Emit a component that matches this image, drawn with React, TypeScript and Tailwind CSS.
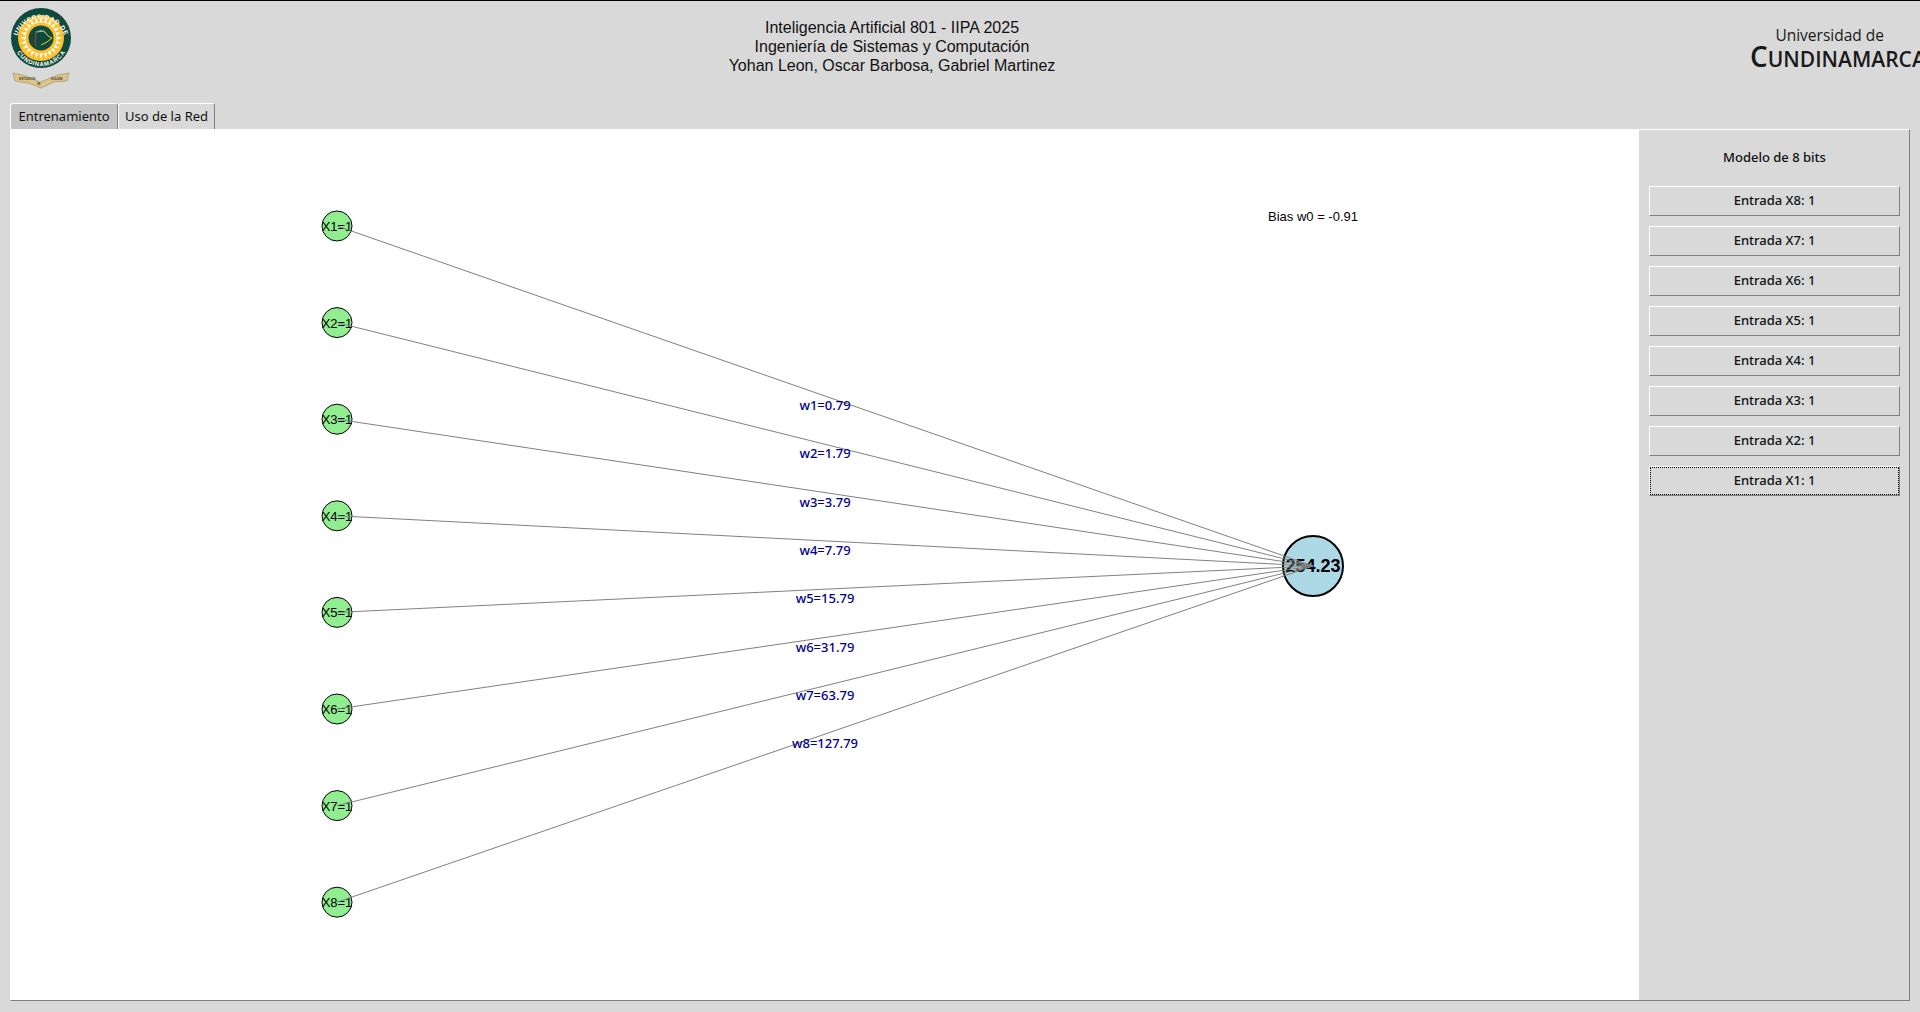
import React from "react";

const inputs = [
  { n: "X1=1", w: "w1=0.79" },
  { n: "X2=1", w: "w2=1.79" },
  { n: "X3=1", w: "w3=3.79" },
  { n: "X4=1", w: "w4=7.79" },
  { n: "X5=1", w: "w5=15.79" },
  { n: "X6=1", w: "w6=31.79" },
  { n: "X7=1", w: "w7=63.79" },
  { n: "X8=1", w: "w8=127.79" },
];

const buttons = ["X8", "X7", "X6", "X5", "X4", "X3", "X2", "X1"];

const nodeY = (i: number) => 216 + i * 96.6;

const Logo = () => {
  const rays = Array.from({ length: 24 }, (_, i) => {
    const a = (i * Math.PI) / 12;
    const b = a + Math.PI / 24;
    const c = a - Math.PI / 24;
    return `${30 + 21 * Math.cos(a)},${30 + 21 * Math.sin(a)} ${30 + 15 * Math.cos(b)},${30 + 15 * Math.sin(b)} ${30 + 15 * Math.cos(c)},${30 + 15 * Math.sin(c)}`;
  });
  return (
    <svg width="64" height="82" viewBox="0 0 64 82" className="block">
      <defs>
        <path id="logoTop" d="M 6.5 32 A 25 25 0 0 1 55.5 32" />
        <path id="logoBot" d="M 8 38 A 24 24 0 0 0 54 38" />
      </defs>
      <g transform="translate(1 1)">
        <circle cx="30" cy="30" r="30" fill="#0f4a3c" />
        <circle cx="30" cy="30" r="23" fill="#fdc02f" />
        {rays.map((r, i) => (
          <polygon key={i} points={r} fill="#ffffff" />
        ))}
        <circle cx="30" cy="30" r="15.5" fill="#fdc02f" />
        <circle cx="30" cy="30" r="12.5" fill="#0f4a3c" />
        <path d="M25 24 L33 23 L37 28 L41 30 L36 34 L30 37" fill="none" stroke="#e6cf3a" strokeWidth="1" />
        <path d="M25 24 L24 36 L26 38" fill="none" stroke="#c0392b" strokeWidth="1" />
        <path d="M25 24 L31 22 L35 26" fill="none" stroke="#5a9bd5" strokeWidth="1" />
      </g>
      <g fontFamily="'Liberation Sans', sans-serif" fontWeight="700" fontSize="6.4" fill="#ffffff">
        <text letterSpacing="0.5"><textPath href="#logoTop" startOffset="50%" textAnchor="middle">UNIVERSIDAD DE</textPath></text>
        <text fontSize="6"><textPath href="#logoBot" startOffset="50%" textAnchor="middle" dominantBaseline="hanging">CUNDINAMARCA</textPath></text>
      </g>
      <path d="M3 66 L13 68 L30 75 L48 68 L59 66 L57 74 L44 75 L31 81 L18 76 L5 74 Z" fill="#d9c58c" stroke="#a08c52" strokeWidth="0.6" />
      <g fontFamily="'Liberation Sans', sans-serif" fontSize="3.2" fill="#4a4020" fontWeight="700">
        <text x="9" y="73">ESTUDIOS</text>
        <text x="27" y="78">IN</text>
        <text x="41" y="73">SOLEM</text>
      </g>
    </svg>
  );
};

const App = () => {
  return (
    <div className="w-[1920px] h-[1012px] bg-[#d9d9d9] border-t border-black flex flex-col overflow-hidden">
      {/* header */}
      <div className="h-[102px] flex justify-between pl-[10px] pr-[10px] pt-[6px] shrink-0">
        <Logo />
        <div className="mt-[11px] ml-[-40px] text-center text-[#111] text-[16px] leading-[19px] font-['Liberation_Sans',sans-serif] w-[500px]">
          <p>Inteligencia Artificial 801 - IIPA 2025</p>
          <p>Ingeniería de Sistemas y Computación</p>
          <p>Yohan Leon, Oscar Barbosa, Gabriel Martinez</p>
        </div>
        <div className="w-[160px] pt-[18px] text-right font-['Open_Sans',sans-serif] text-[#1a1a1a]">
          <p className="text-[15.5px] leading-[20px] pr-[26px]">Universidad de</p>
          <p className="text-[21px] leading-[22px] font-semibold whitespace-nowrap">
            <span className="text-[28px]">C</span>UNDINAMARCA
          </p>
        </div>
      </div>
      {/* tabs */}
      <div className="h-[26px] pl-[10px] flex items-end shrink-0 font-['Noto_Sans',sans-serif] text-[13px] text-[#111]">
        <div className="h-[26px] w-[108px] bg-[#c3c3c3] border border-b-0 border-t-white border-l-white border-r-[#808080] rounded-t-[3px] flex items-center justify-center">
          Entrenamiento
        </div>
        <div className="h-[26px] w-[97px] bg-[#d9d9d9] border border-b-0 border-t-white border-l-white border-r-[#808080] rounded-t-[3px] flex items-center justify-center">
          Uso de la Red
        </div>
      </div>
      {/* notebook */}
      <div className="mx-[10px] w-[1900px] h-[872px] border border-t-white border-l-white border-r-[#808080] border-b-[#808080] flex shrink-0">
        <div className="w-[1628px] h-full bg-white relative">
          <svg width="1628" height="870" className="block">
            {/* output node */}
            <circle cx="1302" cy="436" r="30" fill="#add8e6" stroke="#000" strokeWidth="2" />
            <text x="1302" y="442" textAnchor="middle" fontFamily="'Liberation Sans', sans-serif" fontWeight="700" fontSize="18" fill="#000">254.23</text>
            {/* input nodes */}
            {inputs.map((d, i) => (
              <g key={d.n}>
                <circle cx="326" cy={nodeY(i) - 120 + 0} r="15" fill="#90ee90" stroke="#000" strokeWidth="1" />
                <text x="326" y={nodeY(i) - 115} textAnchor="middle" fontFamily="'Liberation Sans', sans-serif" fontSize="13" fill="#000">{d.n}</text>
                <line x1="326" y1={nodeY(i) - 120} x2="1302" y2="436" stroke="#808080" strokeWidth="1" />
                <text x="814" y={(nodeY(i) - 120 + 436) / 2 + 14} textAnchor="middle" fontFamily="'Noto Sans', sans-serif" fontWeight="500" fontSize="13" fill="#00008b">{d.w}</text>
              </g>
            ))}
            <text x="1302" y="91" textAnchor="middle" fontFamily="'Liberation Sans', sans-serif" fontSize="13" fill="#000">Bias w0 = -0.91</text>
          </svg>
        </div>
        {/* side panel */}
        <div className="flex-1 pl-[10px] pr-[9px] font-['Noto_Sans',sans-serif] text-[13px] text-[#111]">
          <div className="h-[56px] flex items-center justify-center font-medium">Modelo de 8 bits</div>
          <div className="flex flex-col gap-[10px]">
            {buttons.map((b) => (
              <div
                key={b}
                className="h-[30px] border border-t-white border-l-white border-r-[#808080] border-b-[#808080] flex items-center justify-center font-medium relative"
              >
                Entrada {b}: 1
                {b === "X1" && <span className="absolute inset-[0px] border border-dotted border-black" />}
              </div>
            ))}
          </div>
        </div>
      </div>
    </div>
  );
};

export default App;
